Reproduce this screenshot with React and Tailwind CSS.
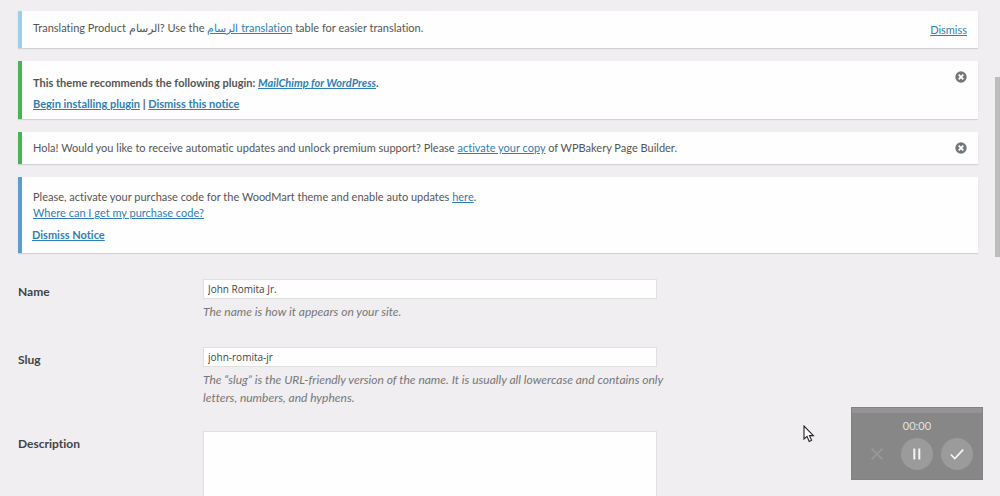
import React from "react";

const linkClass = "text-[#2f7fb5] underline";

function Notice({ accent, className, children }) {
  return (
    <div className={`flex border-l-4 bg-[#fefefe] shadow-[0_1px_1px_rgba(0,0,0,0.12)] ${accent} ${className}`}>
      {children}
    </div>
  );
}

function CloseButton() {
  return (
    <button type="button" aria-label="Dismiss this notice" className="ml-auto h-3 w-3 shrink-0">
      <svg viewBox="0 0 12 12" className="h-3 w-3">
        <circle cx="6" cy="6" r="5.7" fill="#72777c" />
        <path d="M3.7 3.7 L8.3 8.3 M8.3 3.7 L3.7 8.3" stroke="#fff" strokeWidth="1.8" />
      </svg>
    </button>
  );
}

function Row({ id, label, children }) {
  return (
    <div className="flex">
      <label htmlFor={id} className="w-[185px] shrink-0 pt-1 text-xs leading-[18px] font-bold text-[#3f4347]">
        {label}
      </label>
      <div className="min-w-0 flex-1">{children}</div>
    </div>
  );
}

function Hint({ children }) {
  return <p className="mt-1 max-w-[490px] text-xs leading-[18px] text-[#777] italic">{children}</p>;
}

const inputClass =
  "block h-5 w-full max-w-[454px] border border-[#dfdfdf] bg-[#fefefe] px-1 font-['Open_Sans',sans-serif] text-[10px] text-[#444] outline-none";

function Recorder() {
  return (
    <div className="fixed right-[17px] bottom-4 w-[132px] border border-[#828282] bg-[#878787] pb-[9px]">
      <div className="h-[5px] bg-[#949494]" />
      <div className="mt-[5px] text-center text-[11px] leading-4 text-[#e2e2e2]">00:00</div>
      <div className="mt-1 flex justify-end gap-2 pr-[9px]">
        <button type="button" aria-label="Cancel" className="flex h-8 w-8 items-center justify-center">
          <svg viewBox="0 0 16 16" className="h-4 w-4" fill="none" stroke="#979797" strokeWidth="2">
            <path d="M2.5 2.5 L13.5 13.5 M13.5 2.5 L2.5 13.5" />
          </svg>
        </button>
        <button type="button" aria-label="Pause" className="flex h-8 w-8 items-center justify-center rounded-full bg-[#9b9b9b]">
          <svg viewBox="0 0 16 16" className="h-4 w-4" fill="#f4f4f4">
            <rect x="4.3" y="2.5" width="2" height="11" />
            <rect x="9.3" y="2.5" width="2" height="11" />
          </svg>
        </button>
        <button type="button" aria-label="Finish" className="flex h-8 w-8 items-center justify-center rounded-full bg-[#9b9b9b]">
          <svg viewBox="0 0 16 16" className="h-4 w-4" fill="none" stroke="#f6f6f6" strokeWidth="1.7">
            <path d="M1.8 8.5 L5.8 12.5 L14.2 3.6" />
          </svg>
        </button>
      </div>
    </div>
  );
}

export default function App() {
  return (
    <div className="h-screen overflow-hidden bg-[#f0eef0] font-['Lato','Noto_Sans',sans-serif] text-[11px] leading-4 text-[#555] [font-variant-ligatures:none]">
      <main className="pt-[11px] pr-[22px] pl-[18px]">
        <div className="flex flex-col gap-[13px]">
          <Notice accent="border-[#9bcfec]" className="h-[37px] items-start pt-[9px] pr-[11px] pl-[11px]">
            <p>
              Translating Product الرسام? Use the{" "}
              <a href="#translation" className={linkClass}>الرسام translation</a> table for easier translation.
            </p>
            <a href="#dismiss" className={`mt-0.5 ml-auto ${linkClass}`}>Dismiss</a>
          </Notice>

          <Notice accent="border-[#46b450]" className="pt-2.5 pr-[11px] pb-[7px] pl-[11px]">
            <div className="flex flex-col gap-[5px] pt-1 font-bold">
              <p>
                This theme recommends the following plugin:{" "}
                <a href="#mailchimp" className={`italic ${linkClass}`}>MailChimp for WordPress</a>.
              </p>
              <p>
                <a href="#install" className={linkClass}>Begin installing plugin</a> |{" "}
                <a href="#dismiss-plugin" className={linkClass}>Dismiss this notice</a>
              </p>
            </div>
            <CloseButton />
          </Notice>

          <Notice accent="border-[#46b450]" className="items-center py-2 pr-[11px] pl-[11px]">
            <p>
              Hola! Would you like to receive automatic updates and unlock premium support? Please{" "}
              <a href="#activate" className={linkClass}>activate your copy</a> of WPBakery Page Builder.
            </p>
            <CloseButton />
          </Notice>

          <Notice accent="border-[#5b9dd0]" className="flex-col pt-3 pr-[11px] pb-2.5 pl-2.5">
            <p className="pl-px">
              Please, activate your purchase code for the WoodMart theme and enable auto updates{" "}
              <a href="#here" className={linkClass}>here</a>.
              <br />
              <a href="#purchase-code" className={linkClass}>Where can I get my purchase code?</a>
            </p>
            <a href="#dismiss-notice" className={`mt-1.5 self-start font-bold ${linkClass}`}>Dismiss Notice</a>
          </Notice>
        </div>

        <form className="mt-[26px] flex flex-col">
          <Row id="name" label="Name">
            <input id="name" type="text" defaultValue="John Romita Jr." className={inputClass} />
            <Hint>The name is how it appears on your site.</Hint>
          </Row>
          <div className="mt-[26px]">
            <Row id="slug" label="Slug">
              <input id="slug" type="text" defaultValue="john-romita-jr" className={inputClass} />
              <Hint>
                The “slug” is the URL-friendly version of the name. It is usually all lowercase and contains only
                letters, numbers, and hyphens.
              </Hint>
            </Row>
          </div>
          <div className="mt-6">
            <Row id="description" label="Description">
              <textarea
                id="description"
                rows={5}
                className="block h-24 w-full max-w-[454px] resize-none border border-[#dfdfdf] bg-[#fefefe] p-1 outline-none"
              />
            </Row>
          </div>
        </form>
      </main>

      <div className="fixed top-[77px] right-0 h-[180px] w-[5px] bg-[#bdbdbd]" />

      <svg viewBox="0 0 12 18" className="fixed top-[425px] left-[803px] h-[18px] w-3" fill="#fff" stroke="#222" strokeWidth="1.1">
        <path d="M1 1 V14 L4 11.4 L6.2 16.4 L8.6 15.3 L6.5 10.6 H10.4 Z" />
      </svg>

      <Recorder />
    </div>
  );
}
